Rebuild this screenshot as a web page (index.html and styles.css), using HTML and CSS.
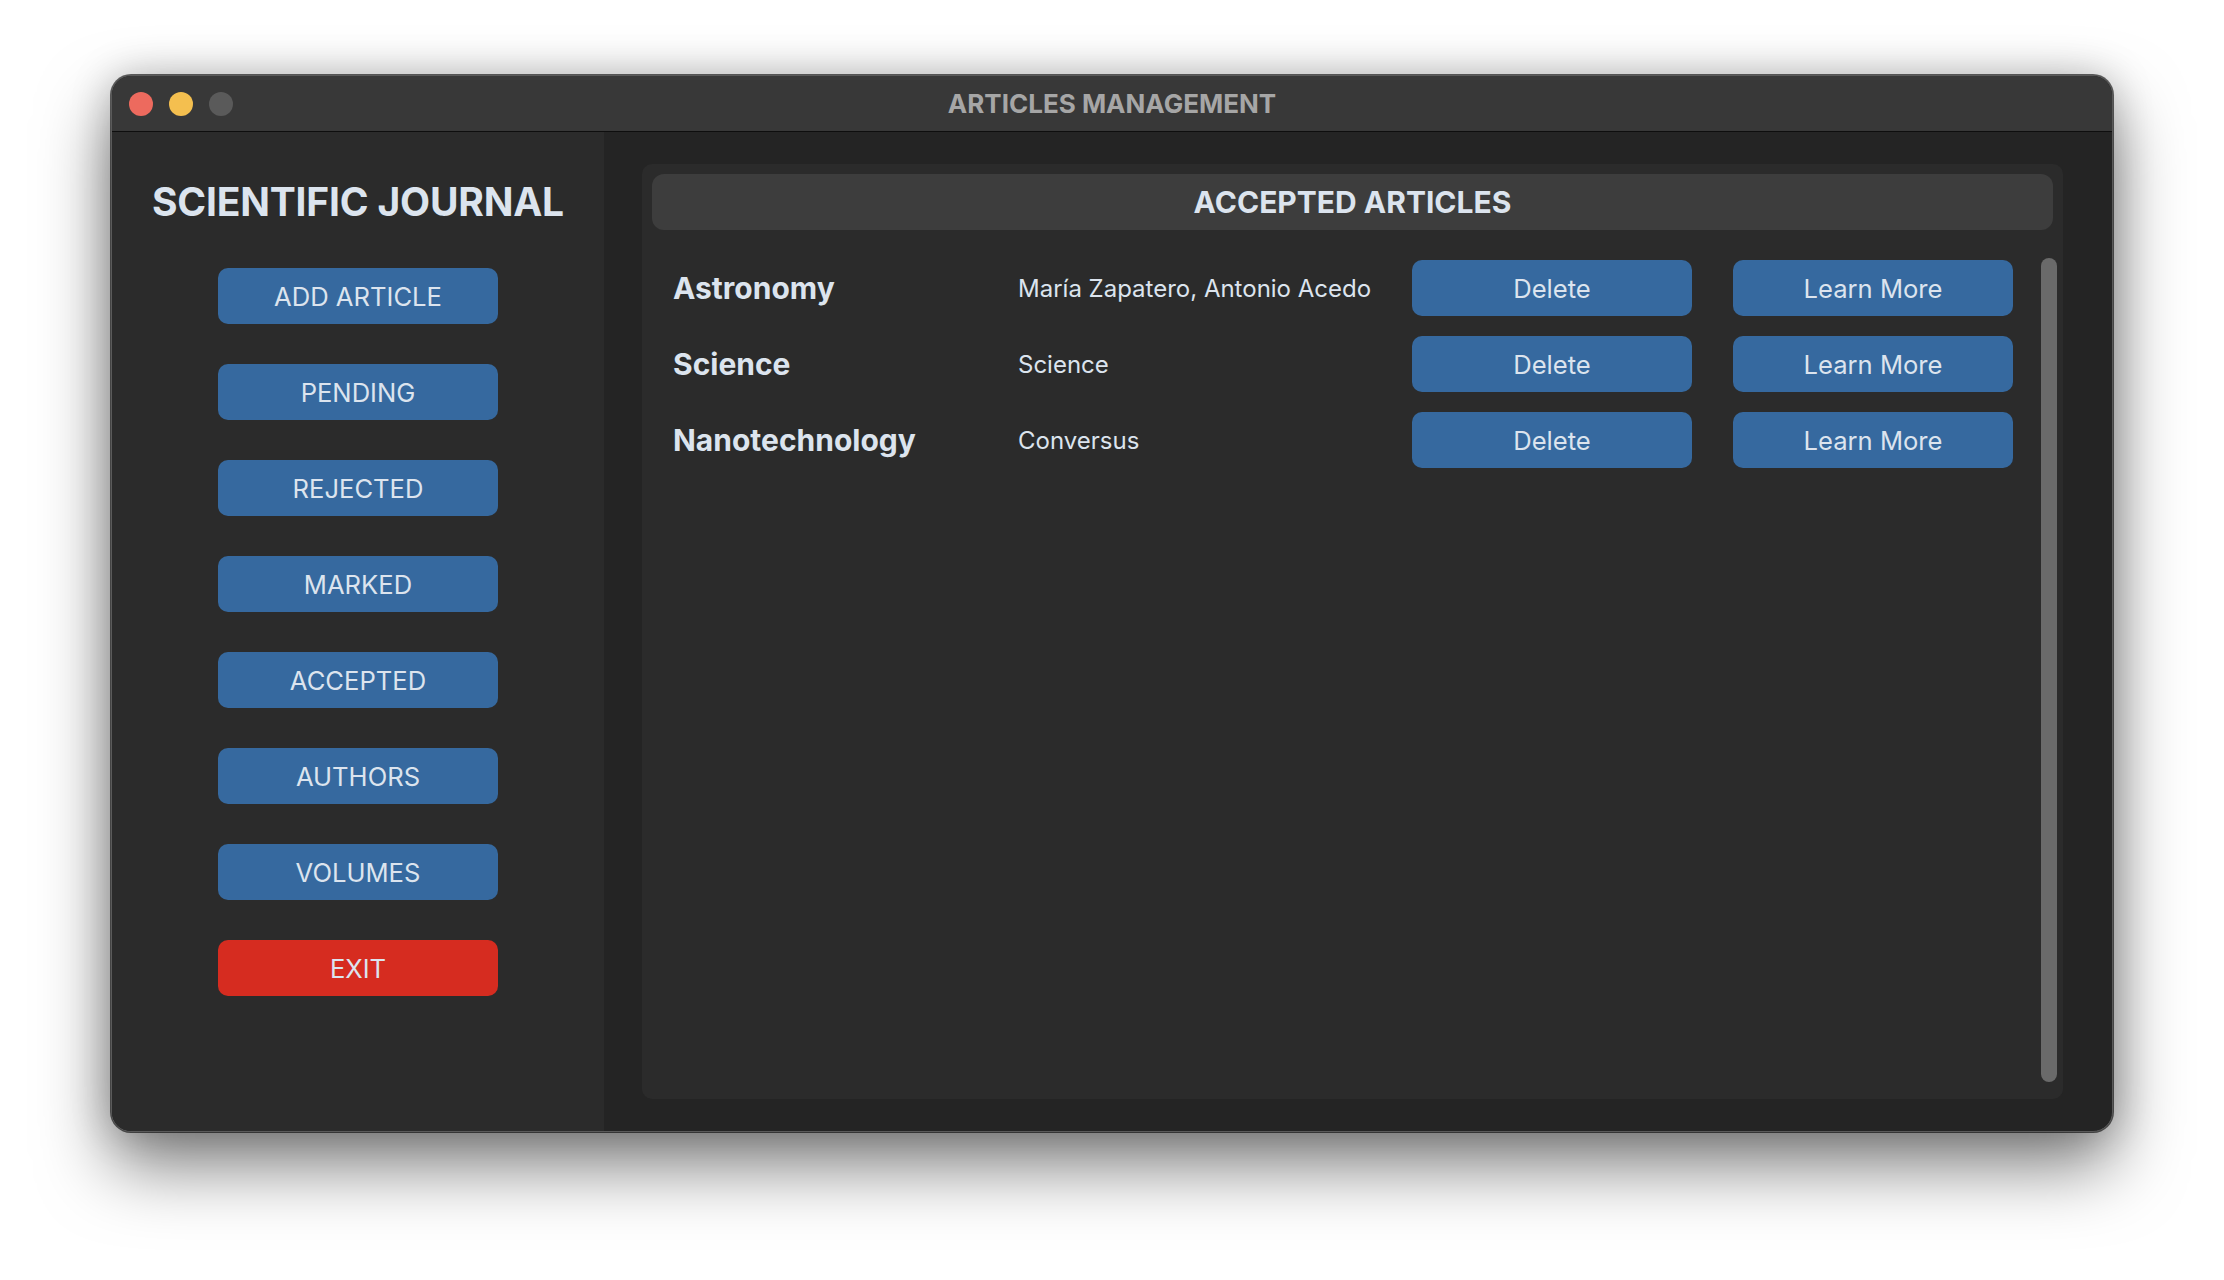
FILE: index.html
```html
<!DOCTYPE html>
<html lang="en">
<head>
<meta charset="utf-8">
<title>Articles Management</title>
<link rel="stylesheet" href="styles.css">
</head>
<body>
<div class="window">
  <div class="titlebar">
    <div class="lights">
      <span class="light red"></span>
      <span class="light yellow"></span>
      <span class="light gray"></span>
    </div>
    <div class="wtitle">ARTICLES MANAGEMENT</div>
  </div>
  <div class="body">
    <aside class="sidebar">
      <h1 class="brand">SCIENTIFIC JOURNAL</h1>
      <nav class="nav">
        <button class="btn nav-btn">ADD ARTICLE</button>
        <button class="btn nav-btn">PENDING</button>
        <button class="btn nav-btn">REJECTED</button>
        <button class="btn nav-btn">MARKED</button>
        <button class="btn nav-btn">ACCEPTED</button>
        <button class="btn nav-btn">AUTHORS</button>
        <button class="btn nav-btn">VOLUMES</button>
        <button class="btn nav-btn exit">EXIT</button>
      </nav>
    </aside>
    <main class="main">
      <section class="panel">
        <div class="panel-head">ACCEPTED ARTICLES</div>
        <div class="scroll">
          <div class="list">
            <div class="name">Astronomy</div>
            <div class="authors">María Zapatero, Antonio Acedo</div>
            <button class="btn row-btn">Delete</button>
            <button class="btn row-btn">Learn More</button>

            <div class="name">Science</div>
            <div class="authors">Science</div>
            <button class="btn row-btn">Delete</button>
            <button class="btn row-btn">Learn More</button>

            <div class="name">Nanotechnology</div>
            <div class="authors">Conversus</div>
            <button class="btn row-btn">Delete</button>
            <button class="btn row-btn">Learn More</button>
          </div>
          <div class="track"><div class="thumb"></div></div>
        </div>
      </section>
    </main>
  </div>
</div>
</body>
</html>
```

FILE: styles.css
```css
* { box-sizing: border-box; }
html, body { margin: 0; padding: 0; }
body {
  background: #ffffff;
  width: 2224px;
  height: 1280px;
  overflow: hidden;
  font-family: Inter, "Liberation Sans", Arial, sans-serif;
  color: #dce4ee;
}
.window {
  width: 2002px;
  height: 1057px;
  margin: 75px 0 0 111px;
  border-radius: 20px;
  border: 1px solid #5a5a5a;
  background: #242424;
  overflow: hidden;
  display: flex;
  flex-direction: column;
  box-shadow: 0 0 0 1px rgba(0,0,0,0.6), 0 34px 70px rgba(0,0,0,0.5), 0 0 40px rgba(0,0,0,0.22);
}
.titlebar {
  height: 56px;
  flex: none;
  background: #383838;
  border-bottom: 1px solid #0e0e0e;
  display: flex;
  align-items: center;
  position: relative;
}
.lights {
  display: flex;
  gap: 16px;
  padding-left: 17px;
}
.light {
  width: 24px;
  height: 24px;
  border-radius: 50%;
  display: block;
}
.light.red { background: #ed6a5e; }
.light.yellow { background: #f4bf4f; }
.light.gray { background: #5a5a5a; }
.wtitle {
  position: absolute;
  left: 0;
  right: 0;
  top: 0;
  bottom: 0;
  display: flex;
  align-items: center;
  justify-content: center;
  font-weight: 700;
  font-size: 26px;
  color: #a6a6a6;
  pointer-events: none;
}
.body {
  flex: 1;
  display: flex;
  min-height: 0;
}
.sidebar {
  width: 492px;
  flex: none;
  background: #2b2b2b;
  display: flex;
  flex-direction: column;
  align-items: center;
  padding-top: 46px;
}
.brand {
  margin: 0;
  font-size: 39px;
  line-height: 48px;
  font-weight: 700;
  color: #dce4ee;
  letter-spacing: -0.2px;
}
.nav {
  margin-top: 42px;
  display: flex;
  flex-direction: column;
  gap: 40px;
}
.btn {
  border: none;
  background: #36699f;
  color: #dce4ee;
  font-family: Inter, "Liberation Sans", Arial, sans-serif;
  font-size: 25.6px;
  font-weight: 400;
  border-radius: 10px;
  height: 56px;
  width: 280px;
  padding: 0;
  display: flex;
  align-items: center;
  justify-content: center;
}
.btn.exit { background: #d62c20; }
.main {
  flex: 1;
  display: flex;
  padding: 32px 49px 32px 38px;
  min-width: 0;
}
.panel {
  flex: 1;
  background: #2b2b2b;
  border-radius: 10px;
  padding: 10px 10px 0 10px;
  display: flex;
  flex-direction: column;
}
.panel-head {
  height: 56px;
  flex: none;
  background: #3d3d3d;
  border-radius: 12px;
  display: flex;
  align-items: center;
  justify-content: center;
  font-weight: 700;
  font-size: 30px;
  color: #dce4ee;
}
.scroll {
  flex: 1;
  display: flex;
  margin: 28px -4px 17px -10px;
  min-height: 0;
}
.list {
  flex: 1;
  padding: 2px 0 0 31px;
  display: grid;
  grid-template-columns: 304px 353px 280px 280px;
  grid-auto-rows: 56px;
  column-gap: 41px;
  row-gap: 20px;
  align-content: start;
  align-items: center;
}
.name {
  font-size: 30px;
  font-weight: 700;
}
.authors {
  font-size: 24px;
  font-weight: 400;
  white-space: nowrap;
}
.track {
  width: 16px;
  flex: none;
  display: flex;
}
.thumb {
  flex: 1;
  background: #6a6a6a;
  border-radius: 8px;
}
```
